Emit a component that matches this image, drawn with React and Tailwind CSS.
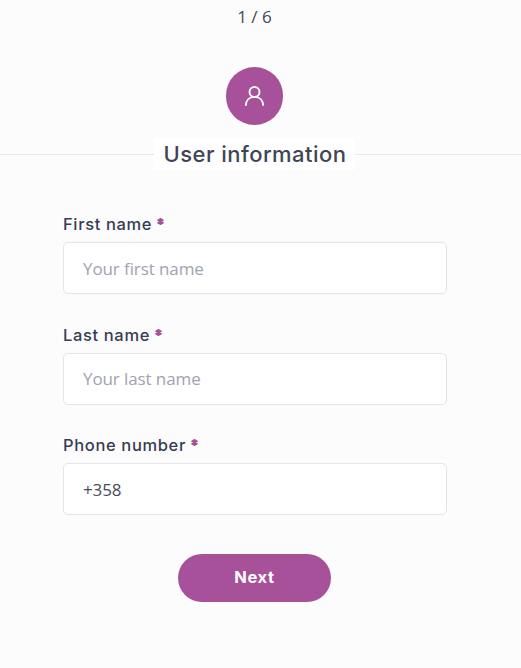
const fields = [
  { id: 'first', label: 'First name', placeholder: 'Your first name', gap: 'mb-[31px]', inset: 'pb-0' },
  { id: 'last', label: 'Last name', placeholder: 'Your last name', gap: 'mb-[30px]', inset: 'pb-[2px]' },
  { id: 'phone', label: 'Phone number', value: '+358', gap: 'mb-[39px]', inset: 'pt-[1px]' },
];

function Field({ id, label, placeholder, value, gap, inset }) {
  return (
    <div className={`flex flex-col ${gap}`}>
      <label htmlFor={id} className="mb-[7px] flex h-[21px] items-center font-['Inter',sans-serif] text-[16.5px] font-medium leading-[21px] tracking-[0.64px] text-[#373d53]">
        {label}
        <svg className="mb-[6px] ml-[5px]" width="7" height="7" viewBox="0 0 7 7" stroke="#a6519a" strokeWidth="2.1">
          <path d="M3.5 .1v6.8M.6 1.7l5.8 3.6M6.4 1.7L.6 5.3" />
        </svg>
      </label>
      <input
        id={id}
        placeholder={placeholder}
        defaultValue={value}
        className={`h-[52px] w-full rounded-[5px] border border-[#e5e5e9] bg-white px-[19px] text-[17px] tracking-[-0.1px] text-[#474c59] outline-none placeholder:text-[#a0a3af] ${inset}`}
      />
    </div>
  );
}

export default function App() {
  return (
    <main className="flex h-[668px] w-[521px] flex-col overflow-hidden bg-[#fcfcfc] font-['Open_Sans',sans-serif]">
      <div className="mt-[5px] flex h-6 w-[509px] items-center justify-center text-[17px] text-[#41475a]">1 / 6</div>
      <div className="ml-[226px] mt-[38px] flex h-[58px] w-[57px] items-center justify-center rounded-full bg-[#a6519a]">
        <svg width="21" height="20" viewBox="0 0 21 20" fill="none" stroke="white" strokeWidth="1.9">
          <circle cx="10.5" cy="6" r="5" />
          <path d="M1.8 19.8C1.8 14.4 5.3 10.9 10.5 10.9s8.7 3.5 8.7 8.9" />
        </svg>
      </div>
      <div className="mt-[13px] flex h-8 items-center">
        <span className="h-px w-[154px] bg-[#e6e6e6]" />
        <h1 className="flex h-8 w-[201px] items-center justify-center whitespace-nowrap bg-white pl-[1px] font-['Inter',sans-serif] text-[22px] font-medium tracking-[0.45px] text-[#3f4557]">User information</h1>
        <span className="h-px flex-1 bg-[#e6e6e6]" />
      </div>
      <form className="ml-[63px] mt-[44px] flex w-[384px] flex-col">
        {fields.map((field) => (
          <Field key={field.id} {...field} />
        ))}
        <button type="button" className="ml-[115px] flex h-12 w-[153px] items-center justify-center rounded-full bg-[#a6519a] pb-[2px] font-['Inter',sans-serif] text-[16.5px] font-bold tracking-[0.7px] text-white">Next</button>
      </form>
    </main>
  );
}
